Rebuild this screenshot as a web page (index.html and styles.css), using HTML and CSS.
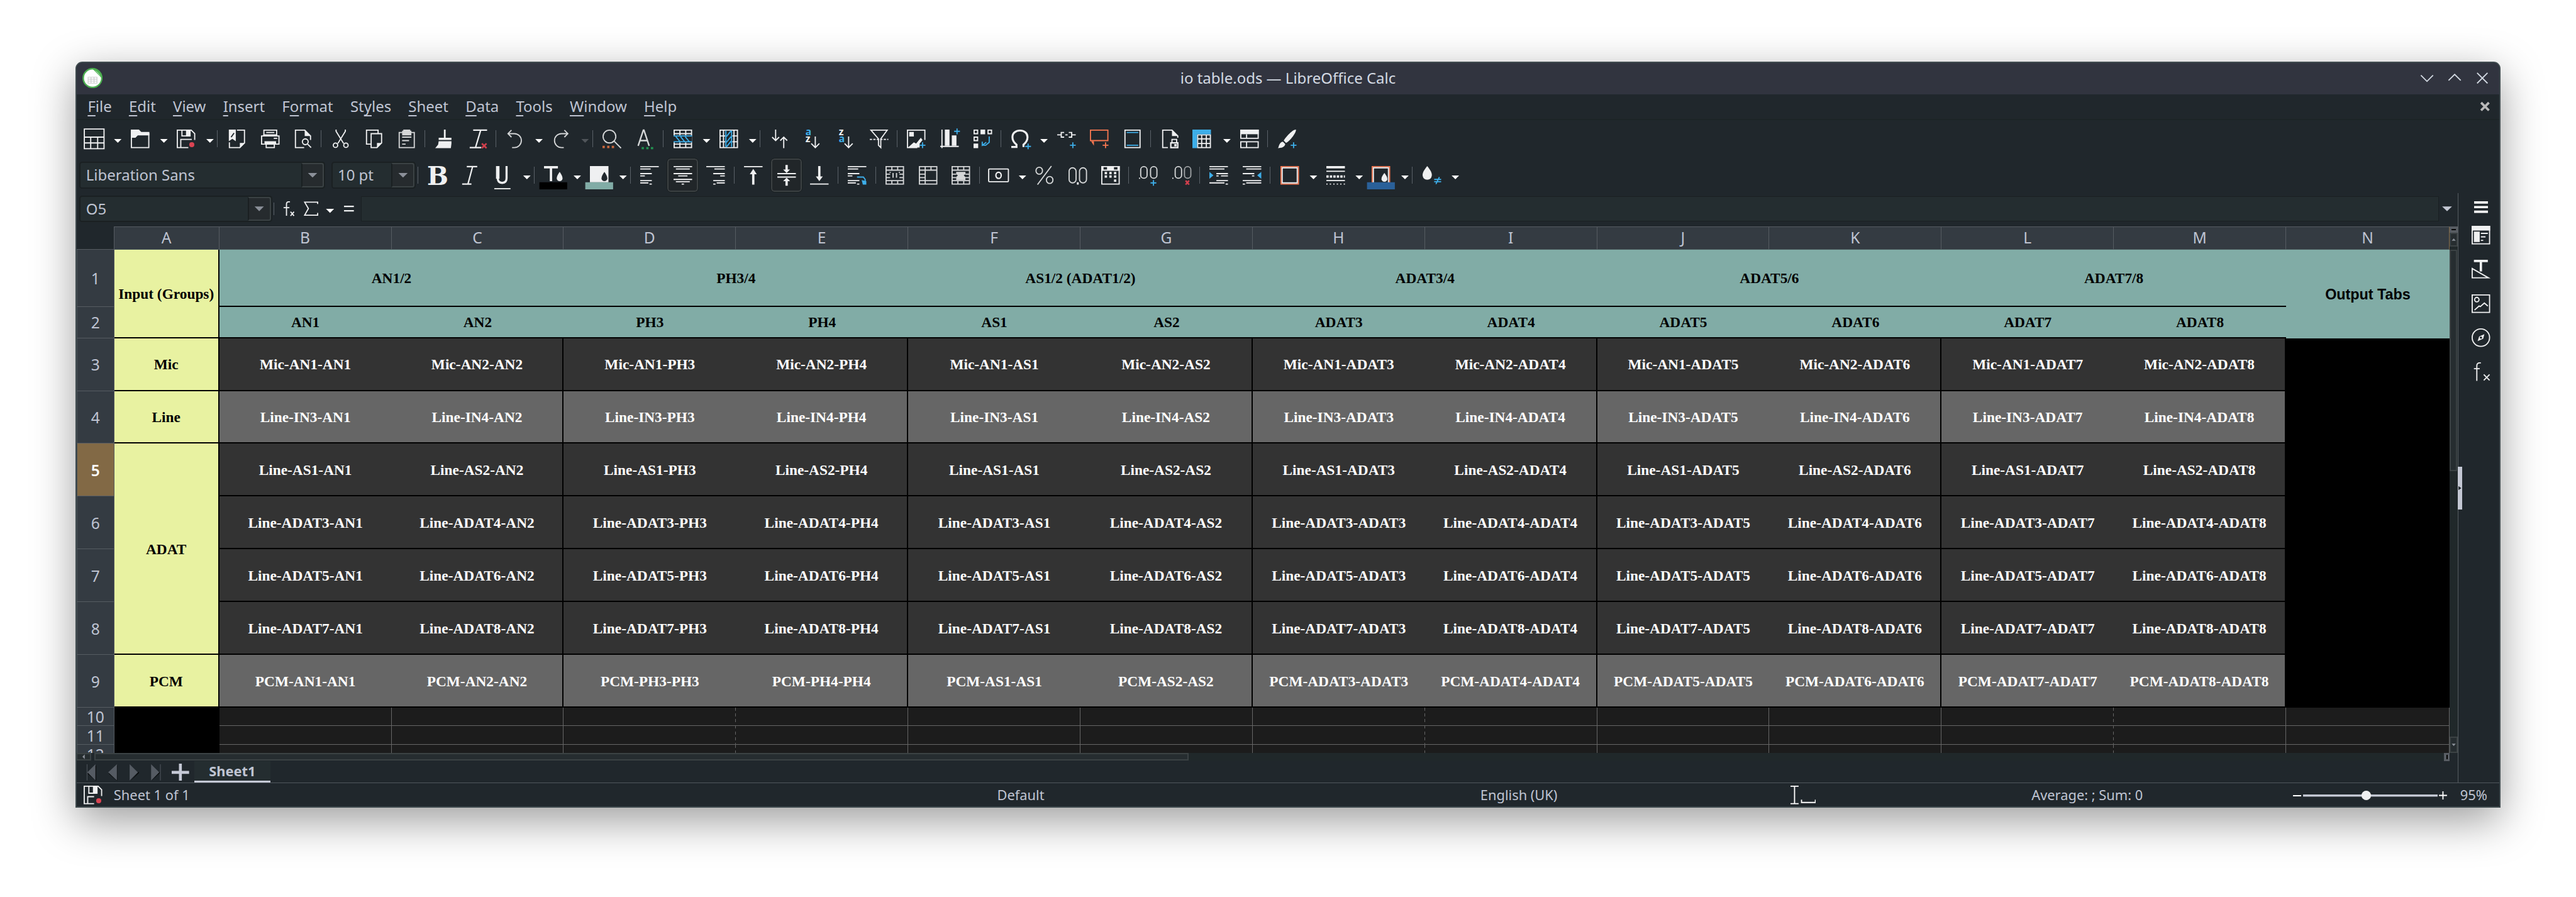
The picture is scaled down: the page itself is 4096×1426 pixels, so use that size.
FILE: index.html
```html
<!DOCTYPE html>
<html lang="en">
<head>
<meta charset="utf-8">
<title>io table.ods — LibreOffice Calc</title>
<link rel="stylesheet" href="styles.css">
</head>
<body>
<div class="desktop">
<div class="window">

<header class="titlebar">
  <svg class="app-icon" viewBox="0 0 34 34"><circle cx="17" cy="17" r="15.6" fill="#fff" stroke="#4caf50" stroke-width="2.6"/><path d="M17 1.500a15.500 15.500 0 0 1 15.500 15.500z" fill="#4caf50"/><path d="M20 3.500q8 3 10.500 11z" fill="#8ed08f"/><path d="M9.500 15.500h15v10h-15zM9.500 18.800h15M9.500 22.100h15M14.500 15.500v10M19.500 15.500v10" fill="none" stroke="#ccc" stroke-width="1.200"/></svg>
  <h1 class="title">io table.ods — LibreOffice Calc</h1>
  <div class="window-buttons">
    <svg viewBox="0 0 24 20"><path d="M1.500 5L12 15.500 22.500 5"/></svg>
    <svg viewBox="0 0 24 20"><path d="M1.500 14L12 3.500 22.500 14"/></svg>
    <svg viewBox="0 0 24 20"><path d="M3 1l18 18M21 1L3 19"/></svg>
  </div>
</header>

<nav class="menubar">
  <span><u>F</u>ile</span><span><u>E</u>dit</span><span><u>V</u>iew</span><span><u>I</u>nsert</span><span>F<u>o</u>rmat</span><span>St<u>y</u>les</span><span><u>S</u>heet</span><span><u>D</u>ata</span><span><u>T</u>ools</span><span><u>W</u>indow</span><span><u>H</u>elp</span>
  <svg class="close-doc" viewBox="0 0 16 16"><path d="M2 2l12 12M14 2L2 14"/></svg>
</nav>

<div class="toolbar standard">
  <div class="tb dd"><svg class="i" viewBox="0 0 16 16"><path d="M-.5-.5h17v17h-17zM-.5 6.500h17M-.5 11.500h17M5 6.500v10M11 6.500v10"/></svg></div>
  <div class="tb dd"><svg class="i" viewBox="0 0 16 16"><path class="f" d="M0 0h7l2 2h7v3H6L4 7H0z"/><path d="M.5 5v10.500h15V3"/></svg></div>
  <div class="tb dd"><svg class="i" viewBox="0 0 16 16"><path d="M10 15.500H.5V.5h12l3 3V9M3.500 15V8.500H13M4.500.5v5h6"/><path class="f" d="M8 0h4v6H8z"/><circle class="fr" cx="13" cy="13" r="2.200"/></svg></div>
  <i class="sep"></i>
  <div class="tb"><svg class="i" viewBox="0 0 16 16"><path class="f" d="M1 0h6v10L4 8l-3 2z"/><path d="M1.500 11v4.500h9l4-4V.5H8"/><path class="f" d="M10.500 16v-4.500H15z"/><path class="k" d="M5.500 3L3 6.500"/></svg></div>
  <div class="tb"><svg class="i" viewBox="0 0 16 16"><path d="M2.500 5V.5h11V5M4.500 2.500h7M3 12.500H.5v-7h15v7H13M4.500 13v2.500h7V13M11 7.500h3"/><path class="f" d="M3 10h10v3H3zM2 4h12v2H2z"/></svg></div>
  <div class="tb"><svg class="i" viewBox="0 0 16 16"><path d="M9 15.500H1.500V.5h8l5 5V9"/><path class="f" d="M9.500 0v5.500H15z"/><circle cx="10" cy="10.500" r="2.500"/><path d="M12 12.500l3 3"/></svg></div>
  <i class="sep"></i>
  <div class="tb"><svg class="i" viewBox="0 0 16 16"><path d="M4 0v1.500L10.500 12M12 0v1.500L5.500 12"/><circle cx="3.500" cy="13.500" r="1.900"/><circle cx="12.500" cy="13.500" r="1.900"/></svg></div>
  <div class="tb"><svg class="i" viewBox="0 0 16 16"><path d="M5 12.500H1.500V.5h10V3M5.500 3.500h9v8l-4 4h-5z"/><path class="f" d="M10.500 16v-4.500H15z"/></svg></div>
  <div class="tb dim"><svg class="i" viewBox="0 0 16 16"><path d="M1.500 2.500h13v13h-13zM4 6.500h8M4 9.500h6M4 12.500h3"/><path class="f" d="M5 0h6v1h1v4H4V1h1z"/></svg></div>
  <i class="sep"></i>
  <div class="tb"><svg class="i" viewBox="0 0 16 16"><path class="f" d="M7.500 0H9v7H7.500zM3 7h11v2H3zM3 10h11v2l-.5 4H0l2.500-3z"/></svg></div>
  <div class="tb"><svg class="i" viewBox="0 0 16 16"><path d="M4 .5h12M10.500.5L6 15.500M1 15.500h10" stroke-width="1.200"/><path class="r" d="M11.500 12l4 4M15.500 12l-4 4" stroke-width="1.500"/></svg></div>
  <i class="sep"></i>
  <div class="tb dd dim"><svg class="i" viewBox="0 0 16 16"><path d="M1.500 3.500H7a6 6 0 0 1 0 12H5M4.500.5l-3 3 3 3"/></svg></div>
  <div class="tb dd dim off"><svg class="i" viewBox="0 0 16 16"><path d="M13.500 3.500H8a6 6 0 0 0 0 12h2M10.500.5l3 3-3 3"/></svg></div>
  <i class="sep"></i>
  <div class="tb"><svg class="i dimmed" viewBox="0 0 16 16"><circle cx="6" cy="6" r="5.500"/><path d="M10 10l6 6"/><path class="fo" d="M0 14h2v2H0zM4 14h2v2H4zM8 14h2v2H8z"/></svg></div>
  <div class="tb"><svg class="i dimmed" viewBox="0 0 16 16"><path d="M2 14L6.500.500h.5L11.500 14M3.500 9.500h6.500" stroke-width="1.300"/><path class="fg" d="M5 15h2v2H5zM9 15h2v2H9zM13 15h2v2h-2z"/></svg></div>
  <i class="sep"></i>
  <div class="tb dd"><svg class="i" viewBox="0 0 16 16"><path d="M.5.5h15v15H.5zM0 3.500h16M0 12.500h16M5.500 0v5M10.500 0v5M5.500 11v5M10.500 11v5"/><path class="k2" d="M0 5h16v6H0z"/><path class="b" d="M0 5.500h16M0 10.500h16M2 6l4 5M6 6l4 5M10 6l4 5"/></svg></div>
  <div class="tb dd"><svg class="i" viewBox="0 0 16 16"><path d="M.5.5h15v15H.5zM3.500 0v16M12.500 0v16M0 5.500h5M0 10.500h5M11 5.500h5M11 10.500h5"/><path class="k2" d="M5 1h6v14H5z"/><path class="b" d="M5.500 1v14M10.500 1v14M6 6l4-5M6 11l4-5M6 15l4-5"/></svg></div>
  <i class="sep"></i>
  <div class="tb"><svg class="i" viewBox="0 0 16 16"><path d="M4.500 0v9.500M1.500 6.500l3 3 3-3M11.500 16V6.500M8.500 9.500l3-3 3 3"/></svg></div>
  <div class="tb"><svg class="i" viewBox="0 0 16 16"><text class="tbl" x="2" y="5">a</text><text class="twh" x="2" y="11">z</text><path d="M10.500 6v9.500M7 12l3.500 3.500L14 12"/></svg></div>
  <div class="tb"><svg class="i" viewBox="0 0 16 16"><text class="twh" x="2" y="5">z</text><text class="tbl" x="2" y="11">a</text><path d="M10.500 6v9.500M7 12l3.500 3.500L14 12"/></svg></div>
  <div class="tb"><svg class="i" viewBox="0 0 16 16"><path d="M1 .5h14L9.500 8v7.500l-2-2V8z"/><path d="M0 8.500h16" stroke-dasharray="2 1"/></svg></div>
  <i class="sep"></i>
  <div class="tb"><svg class="i" viewBox="0 0 16 16"><path d="M9 15.500H.5V.5h15V9"/><path class="f" d="M1 15.500L6 11l2 1 4-5 1.500 2-2.500 3v3.500zM2 2h4v4H2z"/><path class="b" d="M13.500 11v5M11 13.500h5"/></svg></div>
  <div class="tb"><svg class="i" viewBox="0 0 16 16"><path d="M1.500 0v16M0 14.500h16"/><path class="f" d="M4 0h4v14H4zM10 5h4v9h-4z"/><path class="b" d="M14.500-1v5M12 1.500h5"/></svg></div>
  <div class="tb"><svg class="i" viewBox="0 0 16 16"><path d="M.5.5h3v3h-3zM12.500.5h3v3h-3zM.5 6.500h3v3h-3z"/><path class="f" d="M6 0h4v4H6zM0 12h4v4H0z"/><path class="b" d="M13.500 6v5l-3 2.500H7.500M11 11l-3.500 2.500v-3"/></svg></div>
  <i class="sep"></i>
  <div class="tb dd"><svg class="i" viewBox="0 0 16 16"><path d="M0 15h4.500v-2C2 11 1 9 1 6.500 1 3 4 .8 7.500.8S14 3 14 6.500c0 2.500-1 4.500-3.500 6.500v2" stroke-width="1.700"/><path class="b" d="M14.500 12v5M12 14.500h5"/></svg></div>
  <div class="tb"><svg class="i" viewBox="0 0 16 16"><path d="M0 4.500h4M12 4.500h4M6 2.500H3.500v4H6M10 2.500h2.500v4H10M7 4.500h2"/><path class="b" d="M13.500 11v5M11 13.500h5"/></svg></div>
  <div class="tb"><svg class="i" viewBox="0 0 16 16"><path class="o" d="M.5.500h15v9H.5z"/><path class="fo2" d="M1 10h2.500v4z"/><path class="o" d="M13.500 11v5M11 13.500h5"/></svg></div>
  <div class="tb"><svg class="i" viewBox="0 0 16 16"><path d="M1.500.5h13v15h-13z"/><path class="b" d="M3 2.500h10M3 13.500h10"/></svg></div>
  <i class="sep"></i>
  <div class="tb"><svg class="i" viewBox="0 0 16 16"><path d="M6 15.500H1.500V.5h8l5 5V7M9.500 11V8.500h4V11"/><path class="f" d="M9.500 0v5.500H15z"/><path d="M8.500 11.500h6v4h-6z" stroke-width="1.200"/><path class="f" d="M11.500 12.500h2v2h-2z"/></svg></div>
  <div class="tb dd nudge"><svg class="i" viewBox="0 0 16 16"><path d="M4.500 4.500h11v11h-11zM8 4v12M12 4v12M4 8h12M4 12h12"/><path class="fb" d="M0 0h16v4H4v12H0z"/></svg></div>
  <div class="tb"><svg class="i" viewBox="0 0 16 16"><path class="f" d="M0 0h16v4H0z"/><path d="M.5.500h15v7H.500zM.5 10.500h15v5H.500zM5.500 4v4M5.500 10v6"/></svg></div>
  <i class="sep"></i>
  <div class="tb"><svg class="i" viewBox="0 0 16 16"><path class="f" d="M15.500 0c.8 2-5 10-8.500 11.500L5 9.500C7 6 13-.3 15.500 0zM4.300 10.500l2 2C6 15 3 16 0 16c1-1 .8-5 4.300-5.500z"/><path class="b" d="M13.500 11v5M11 13.500h5"/></svg></div>
</div>

<div class="toolbar formatting">
  <div class="combo font-name"><span>Liberation Sans</span><i class="drop"></i></div>
  <div class="combo font-size"><span>10 pt</span><i class="drop"></i></div>
  <i class="sep"></i>
  <div class="tb"><svg class="i" viewBox="0 0 16 16"><text class="bold-letter" x="-.6" y="16">B</text></svg></div>
  <div class="tb"><svg class="i" viewBox="0 0 16 16"><path d="M5 .5h9M10 .5L6 15.500M1 15.500h8" stroke-width="1.200"/></svg></div>
  <div class="tb dd"><svg class="i" viewBox="0 0 16 16"><path d="M3.500 0v10.500q0 4 3.800 4t3.800-4V0" stroke-width="1.800"/><path class="f" d="M2 0h3v11H2z"/><path d="M.5 19.500h14"/></svg></div>
  <i class="sep"></i>
  <div class="tb dd"><svg class="i" viewBox="0 0 16 16"><path class="f" d="M0 0h12v2H0zM5 1h2v12H5zM13.500 5c2.500 3.500 2.500 5 2.500 6q-.5 2-2.500 2t-2.500-2c0-1 0-2.500 2.500-6z"/><path class="black" d="M-4 14h24v6H-4z"/></svg></div>
  <div class="tb dd"><svg class="i" viewBox="0 0 16 16"><path class="f" d="M0 0h16v14H0z"/><path class="k2" d="M12.500 5c2.500 3.500 2.500 5 2.500 6q-.5 2-2.500 2t-2.500-2c0-1 0-2.500 2.500-6z"/><path class="teal" d="M-4 14h24v6H-4z"/></svg></div>
  <i class="sep"></i>
  <div class="tb"><svg class="i" viewBox="0 0 16 16"><path d="M0 .5h16M0 2.500h9M0 6.500h10M0 8.500h4M0 12.500h10M0 14.500h7M8 15.500h2"/></svg></div>
  <div class="tb"><span class="pressed"><svg class="i" viewBox="0 0 16 16"><path d="M0 .5h16M2 2.500h12M0 6.500h16M4 8.500h8M0 11.500h16M2 13.500h12M7 15.500h2"/></svg></span></div>
  <div class="tb"><svg class="i" viewBox="0 0 16 16"><path d="M0 .5h16M7 2.500h9M6 6.500h10M12 8.500h4M6 12.500h10M9 14.500h7M6 15.500h2"/></svg></div>
  <i class="sep"></i>
  <div class="tb"><svg class="i" viewBox="0 0 16 16"><path d="M0 .5h16"/><path class="f" d="M7 16V7H5l3-4.500L11 7H9v9z"/></svg></div>
  <div class="tb"><span class="pressed"><svg class="i" viewBox="0 0 16 16"><path d="M0 6.500h16M0 9.500h16"/><path class="f" d="M7-1h2v4h2L8 6 5 3h2zM7 17h2v-4h2l-3-3-3 3h2z"/></svg></span></div>
  <div class="tb"><svg class="i" viewBox="0 0 16 16"><path d="M0 15.500h16"/><path class="f" d="M7 0v9H5l3 4 3-4H9V0z"/></svg></div>
  <i class="sep"></i>
  <div class="tb"><svg class="i" viewBox="0 0 16 16"><path d="M0 .5h16M0 2.500h9M0 6.500h10M0 8.500h4M0 12.500h10M0 14.500h7M8 15.500h2"/><path class="b" d="M8 9.500h5.500l1.500 2V13"/><path class="fb" d="M12 12l4 1v3h-3z"/></svg></div>
  <i class="sep"></i>
  <div class="tb dim"><svg class="i" viewBox="0 0 16 16"><path d="M.5.5h15v15H.5zM0 3.500h16M0 12.500h16M5.500 0v3M10.500 0v3M5.500 12v4M10.500 12v4M0 7h4M12 7h4M0 10h4M12 10h4M6.500 6v4M9.500 6v4M4 5v1M12 5v1"/></svg></div>
  <div class="tb dim"><svg class="i" viewBox="0 0 16 16"><path d="M.5.5h15v15H.5zM0 3.500h16M5.500 0v16M10.500 0v4M0 7h5M0 10h5M0 12.500h16"/></svg></div>
  <div class="tb dim"><svg class="i" viewBox="0 0 16 16"><path d="M.5.5h15v15H.5zM0 3.500h16M0 12.500h16M5.500 0v3M10.500 0v3M5.500 12v4M10.500 12v4M0 7h4M12 7h4M0 10h4M12 10h4"/><path class="f" d="M4 5h8v2l-1.500 1 1.500 1.500V12H4V9.500L5.500 8 4 7z"/></svg></div>
  <i class="sep"></i>
  <div class="tb dd"><svg class="i" viewBox="0 0 16 16"><rect x="-.5" y="2.500" width="17" height="11" rx=".6"/><ellipse cx="8" cy="8" rx="2.300" ry="2.700" stroke-width="1.200"/></svg></div>
  <div class="tb"><svg class="i dimmed" viewBox="0 0 16 16"><ellipse cx="3.500" cy="4" rx="2.800" ry="3"/><ellipse cx="12.500" cy="12" rx="2.800" ry="3"/><path d="M14 0L2 16"/></svg></div>
  <div class="tb"><svg class="i dimmed" viewBox="0 0 16 16"><rect x=".5" y="1.500" width="6" height="13" rx="3"/><rect x="9.500" y="1.500" width="6" height="13" rx="3"/><path class="f" d="M7.200 14h1.600v2H7.200z"/></svg></div>
  <div class="tb"><svg class="i" viewBox="0 0 16 16"><path d="M.5.500h15v15H.500z"/><path class="f" d="M0 0h2v3h3V0h6v3h3V0h2v4H0zM3 5h2v2H3zM7 5h2v2H7zM11 5h2v2h-2zM3 8h2v2H3zM7 8h2v2H7zM11 8h2v2h-2zM11 11.500h2v2h-2z"/></svg></div>
  <i class="sep"></i>
  <div class="tb"><svg class="i dimmed" viewBox="0 0 16 16"><rect x="1.500" y=".5" width="5.500" height="10" rx="2.700"/><rect x="10" y=".5" width="5.500" height="10" rx="2.700"/><path class="f" d="M0 10h1v1H0z"/><path class="b" d="M12.500 12v5M10 14.500h5"/></svg></div>
  <div class="tb"><svg class="i dimmed" viewBox="0 0 16 16"><rect x="2.500" y=".5" width="5.500" height="10" rx="2.700"/><rect x="10.500" y=".5" width="5.500" height="10" rx="2.700" opacity=".7"/><path class="f" d="M0 10h1v1H0z"/><path class="r" d="M11.500 12.500l3 3.500M14.500 12.500l-3 3.500" stroke-width="1.400"/></svg></div>
  <i class="sep"></i>
  <div class="tb"><svg class="i" viewBox="0 0 16 16"><path d="M0 .5h16M0 2.500h13M6 6.500h10M6 8.500h2M10 8.500h6M6 12.500h10M0 14.500h13M14 15.500h2"/><path class="fb" d="M0 5l3.500 3L0 11z"/></svg></div>
  <div class="tb"><svg class="i" viewBox="0 0 16 16"><path d="M0 .5h16M3 2.500h13M0 6.500h10M8 8.500h2M0 12.500h16M3 14.500h13M0 15.500h2"/><path class="fb" d="M16 5l-3.500 3 3.500 3z"/></svg></div>
  <i class="sep"></i>
  <div class="tb dd"><svg class="i" viewBox="0 0 16 16"><path class="o" d="M.5.500h15v15H.500z"/><path d="M1.500 1.500h13v13h-13z"/></svg></div>
  <div class="tb dd"><svg class="i" viewBox="0 0 16 16"><path class="f" d="M0 0h16v2H0z"/><path d="M0 4.500h16"/><path d="M0 9h16" stroke-width="2" stroke-dasharray="2 1"/><path d="M0 12.500h16"/><path d="M0 15.500h16" stroke-dasharray="1 2"/></svg></div>
  <div class="tb dd"><svg class="i" viewBox="0 0 16 16"><path class="o" d="M.5 15V.5h15V15"/><path d="M1.500 15V1.500h13V15"/><path class="f" d="M11 6c2.500 3 2.500 4.500 2.500 5.500q-.5 2-2.500 2t-2.500-2C8.500 10.500 8.500 9 11 6z"/><path class="navy" d="M-4 14h24v6H-4z"/></svg></div>
  <i class="sep"></i>
  <div class="tb dd"><svg class="i" viewBox="0 0 16 16"><path class="f" d="M4 0c3.500 4.500 4 6 4 8q-.5 3.800-4 3.800T0 8c0-2 .5-3.500 4-8z"/><path class="b" d="M10 11.500h6M10 13.500h6M14.500 9.500l-3 6"/></svg></div>
</div>

<main class="body">
  <section class="document">
    <div class="formula-bar">
      <div class="combo name-box"><span>O5</span><i class="drop"></i></div>
      <i class="sep short"></i>
      <svg class="fx" viewBox="0 0 20 26"><path d="M12 1H9.500Q6 1 6 5v20M1 11h10M13 18l6 7M19 18l-6 7"/></svg>
      <svg class="sum" viewBox="0 0 25 26"><path d="M24 4.500V1.500H1.500L8 12.500 1.500 24H24v-4"/></svg>
      <i class="tri"></i>
      <svg class="eq" viewBox="0 0 17 10"><path d="M0 1.200h17M0 8.800h17"/></svg>
      <div class="formula-input"></div>
      <i class="tri big"></i>
    </div>

    <div class="sheet-area">
      <div class="grid">
        <div class="corner"></div><div class="ch">A</div><div class="ch">B</div><div class="ch">C</div><div class="ch">D</div><div class="ch">E</div><div class="ch">F</div><div class="ch">G</div><div class="ch">H</div><div class="ch">I</div><div class="ch">J</div><div class="ch">K</div><div class="ch">L</div><div class="ch">M</div><div class="ch last">N</div>

        <div class="rh">1</div><div class="c y rows2">Input (Groups)</div><div class="c t pair">AN1/2</div><div class="c t pair">PH3/4</div><div class="c t pair">AS1/2 (ADAT1/2)</div><div class="c t pair">ADAT3/4</div><div class="c t pair">ADAT5/6</div><div class="c t pair">ADAT7/8</div><div class="c t rows2 sans">Output Tabs</div>
        <div class="rh">2</div><div class="c t">AN1</div><div class="c t">AN2</div><div class="c t">PH3</div><div class="c t">PH4</div><div class="c t">AS1</div><div class="c t">AS2</div><div class="c t">ADAT3</div><div class="c t">ADAT4</div><div class="c t">ADAT5</div><div class="c t">ADAT6</div><div class="c t">ADAT7</div><div class="c t">ADAT8</div>

        <div class="rh">3</div><div class="c y">Mic</div><div class="c d">Mic-AN1-AN1</div><div class="c d e">Mic-AN2-AN2</div><div class="c d">Mic-AN1-PH3</div><div class="c d e">Mic-AN2-PH4</div><div class="c d">Mic-AN1-AS1</div><div class="c d e">Mic-AN2-AS2</div><div class="c d">Mic-AN1-ADAT3</div><div class="c d e">Mic-AN2-ADAT4</div><div class="c d">Mic-AN1-ADAT5</div><div class="c d e">Mic-AN2-ADAT6</div><div class="c d">Mic-AN1-ADAT7</div><div class="c d e">Mic-AN2-ADAT8</div><div class="k rows7"></div>
        <div class="rh">4</div><div class="c y">Line</div><div class="c g">Line-IN3-AN1</div><div class="c g e">Line-IN4-AN2</div><div class="c g">Line-IN3-PH3</div><div class="c g e">Line-IN4-PH4</div><div class="c g">Line-IN3-AS1</div><div class="c g e">Line-IN4-AS2</div><div class="c g">Line-IN3-ADAT3</div><div class="c g e">Line-IN4-ADAT4</div><div class="c g">Line-IN3-ADAT5</div><div class="c g e">Line-IN4-ADAT6</div><div class="c g">Line-IN3-ADAT7</div><div class="c g e">Line-IN4-ADAT8</div>
        <div class="rh current">5</div><div class="c y rows4">ADAT</div><div class="c d">Line-AS1-AN1</div><div class="c d e">Line-AS2-AN2</div><div class="c d">Line-AS1-PH3</div><div class="c d e">Line-AS2-PH4</div><div class="c d">Line-AS1-AS1</div><div class="c d e">Line-AS2-AS2</div><div class="c d">Line-AS1-ADAT3</div><div class="c d e">Line-AS2-ADAT4</div><div class="c d">Line-AS1-ADAT5</div><div class="c d e">Line-AS2-ADAT6</div><div class="c d">Line-AS1-ADAT7</div><div class="c d e">Line-AS2-ADAT8</div>
        <div class="rh">6</div><div class="c d">Line-ADAT3-AN1</div><div class="c d e">Line-ADAT4-AN2</div><div class="c d">Line-ADAT3-PH3</div><div class="c d e">Line-ADAT4-PH4</div><div class="c d">Line-ADAT3-AS1</div><div class="c d e">Line-ADAT4-AS2</div><div class="c d">Line-ADAT3-ADAT3</div><div class="c d e">Line-ADAT4-ADAT4</div><div class="c d">Line-ADAT3-ADAT5</div><div class="c d e">Line-ADAT4-ADAT6</div><div class="c d">Line-ADAT3-ADAT7</div><div class="c d e">Line-ADAT4-ADAT8</div>
        <div class="rh">7</div><div class="c d">Line-ADAT5-AN1</div><div class="c d e">Line-ADAT6-AN2</div><div class="c d">Line-ADAT5-PH3</div><div class="c d e">Line-ADAT6-PH4</div><div class="c d">Line-ADAT5-AS1</div><div class="c d e">Line-ADAT6-AS2</div><div class="c d">Line-ADAT5-ADAT3</div><div class="c d e">Line-ADAT6-ADAT4</div><div class="c d">Line-ADAT5-ADAT5</div><div class="c d e">Line-ADAT6-ADAT6</div><div class="c d">Line-ADAT5-ADAT7</div><div class="c d e">Line-ADAT6-ADAT8</div>
        <div class="rh">8</div><div class="c d">Line-ADAT7-AN1</div><div class="c d e">Line-ADAT8-AN2</div><div class="c d">Line-ADAT7-PH3</div><div class="c d e">Line-ADAT8-PH4</div><div class="c d">Line-ADAT7-AS1</div><div class="c d e">Line-ADAT8-AS2</div><div class="c d">Line-ADAT7-ADAT3</div><div class="c d e">Line-ADAT8-ADAT4</div><div class="c d">Line-ADAT7-ADAT5</div><div class="c d e">Line-ADAT8-ADAT6</div><div class="c d">Line-ADAT7-ADAT7</div><div class="c d e">Line-ADAT8-ADAT8</div>
        <div class="rh">9</div><div class="c y">PCM</div><div class="c g">PCM-AN1-AN1</div><div class="c g e">PCM-AN2-AN2</div><div class="c g">PCM-PH3-PH3</div><div class="c g e">PCM-PH4-PH4</div><div class="c g">PCM-AS1-AS1</div><div class="c g e">PCM-AS2-AS2</div><div class="c g">PCM-ADAT3-ADAT3</div><div class="c g e">PCM-ADAT4-ADAT4</div><div class="c g">PCM-ADAT5-ADAT5</div><div class="c g e">PCM-ADAT6-ADAT6</div><div class="c g">PCM-ADAT7-ADAT7</div><div class="c g e">PCM-ADAT8-ADAT8</div>

        <div class="rh">10</div><div class="k rows3"></div><div class="n"></div><div class="n"></div><div class="n brk"></div><div class="n"></div><div class="n"></div><div class="n"></div><div class="n brk"></div><div class="n"></div><div class="n"></div><div class="n"></div><div class="n brk"></div><div class="n"></div><div class="n"></div>
        <div class="rh">11</div><div class="n"></div><div class="n"></div><div class="n brk"></div><div class="n"></div><div class="n"></div><div class="n"></div><div class="n brk"></div><div class="n"></div><div class="n"></div><div class="n"></div><div class="n brk"></div><div class="n"></div><div class="n"></div>
        <div class="rh cut">12</div><div class="n"></div><div class="n"></div><div class="n brk"></div><div class="n"></div><div class="n"></div><div class="n"></div><div class="n brk"></div><div class="n"></div><div class="n"></div><div class="n"></div><div class="n brk"></div><div class="n"></div><div class="n"></div>
      </div>
      <div class="vscroll">
        <div class="split-grip"></div>
        <div class="arrow-box up"></div>
        <div class="thumb"></div>
        <div class="track"></div>
        <div class="arrow-box down"></div>
      </div>
    </div>

    <div class="hscroll">
      <div class="arrow-box left"></div>
      <div class="thumb"></div>
      <div class="track"></div>
      <div class="split-grip"></div>
    </div>

    <div class="tabs">
      <svg class="nav" viewBox="0 0 130 30"><path class="sh" d="M17 3v27L2.500 17zM53.500 3v27L39 17zM76 30l15-14v-2zM112 30l15-14v-2z"/><path d="M16 1v28L2 15zM1 1h1v28H1zM53 1v28L38 15zM75 1v28l14-14zM112 1v28l14-14zM127.500 1h1v28h-1z"/></svg>
      <svg class="plus" viewBox="0 0 30 30"><path d="M0 15h30M15 0v30"/></svg>
      <div class="tab">Sheet1</div>
    </div>
  </section>

  <aside class="sidebar">
    <div class="sidebar-handle"></div>
    <svg class="burger" viewBox="0 0 24 20"><path d="M0 2h24M0 10h24M0 18h24"/></svg>
    <svg class="i" viewBox="0 0 16 16"><path d="M.5.500h15v15H.500zM8 6.500h6M8 9.500h4M8 12.500h2"/><path class="f" d="M0 0h16v4H0zM2 5h5v9H2z"/></svg>
    <svg class="i" viewBox="0 0 16 16"><path d="M.5 7.500v8h14z"/><path class="f" d="M2 0h12v2H2zM7 1h2v9H7z"/></svg>
    <svg class="i" viewBox="0 0 16 16"><path d="M.5.500h15v15H.500zM2.500 13.500l4-3.500 1 .5L11 7.500l3 2.500"/><circle cx="4.500" cy="4.500" r="1.900"/></svg>
    <svg class="i" viewBox="0 0 16 16"><circle cx="8" cy="8" r="7.500"/><path class="f" fill-rule="evenodd" d="M11 5l-1 4-4.800 2L6.500 7zM8 7a1 1 0 1 0 .1 2A1 1 0 0 0 8 7z"/></svg>
    <svg class="i" viewBox="0 0 16 16"><path d="M8 .5H7Q4.500.500 4.500 3v13M2 5.500h5M10.500 10.500l5 5M15.500 10.500l-5 5"/></svg>
  </aside>
</main>

<footer class="statusbar">
  <div class="st-save"><svg class="i" viewBox="0 0 16 16"><path d="M9 15.500H.5V.5h12l3 3V9M3.500 15V9.500H9M4.500.5v6h6"/><path class="f" d="M8 0h4v7H8z"/><circle class="fr" cx="13" cy="13" r="2.200"/></svg></div>
  <div>Sheet 1 of 1</div>
  <div class="st-center">Default</div>
  <div class="st-center">English (UK)</div>
  <div class="st-mode"><svg viewBox="0 0 44 32"><path d="M0 1h14M0 31h14M7 1v30M19 24v5h24v-5"/></svg></div>
  <div>Average: ; Sum: 0</div>
  <div class="zoom-ctl"><i class="minus"></i><div class="slider"><i class="knob"></i></div><svg viewBox="0 0 14 14"><path d="M0 7h14M7 0v14"/></svg></div>
  <div>95%</div>
</footer>

</div>
</div>
</body>
</html>
```

FILE: styles.css
```css
:root {
  --bg: #20272c;
  --ink: #eff0f1;
  --text: #bfc4d2;
  --field: #242d30;
  --edge: #1a2022;
  --line: #50575d;
  --head: #343b42;
  --blue: #3daee9;
  --ui: "Noto Sans", "Open Sans", sans-serif;
}

* { box-sizing: border-box; }

html { overflow: hidden; background: #fff; }

body {
  margin: 0;
  width: 4096px;
  height: 1426px;
  overflow: hidden;
  background: #fff;
}

/* The desktop is laid out at 4442x1546 and zoomed to the viewport. */
.desktop {
  width: 4442px;
  height: 1546px;
  padding: 106px 130px 154px;
  zoom: 0.92211;
  font: 26px/1.36 var(--ui);
  color: var(--text);
}

.window {
  display: flex;
  flex-direction: column;
  width: 4182px;
  height: 1286px;
  border: 2.2px solid #3f4a4e;
  border-radius: 12px 12px 0 0;
  background: var(--bg);
  box-shadow: 0 22px 74px rgba(0, 0, 0, .39);
}

svg { display: block; flex: none; }
i { display: block; flex: none; }

/* title bar */
.titlebar {
  display: grid;
  flex: none;
  grid-template-columns: 200px 1fr 200px;
  align-items: center;
  height: 54px;
  padding: 0 17px 1px 10px;
  border-radius: 10px 10px 0 0;
  background: #31343f;
}
.app-icon { width: 35px; height: 35px; }
.title {
  margin: 0;
  font-size: 26px;
  font-weight: 400;
  text-align: center;
  color: #d3dae3;
  padding-left: 7px;
}
.window-buttons { display: flex; gap: 24px; justify-content: flex-end; }
.window-buttons svg { width: 24px; height: 20px; fill: none; stroke: #d3dae3; stroke-width: 2; }

/* menu bar */
.menubar {
  display: flex;
  flex: none;
  gap: 29.5px;
  align-items: center;
  height: 45px;
  padding: 1px 16px 1px 19px;
  border-bottom: 2.2px solid #1c2426;
}
.menubar u { text-decoration-thickness: 2px; text-underline-offset: 5px; text-decoration-skip-ink: none; }
.close-doc { width: 18px; height: 18px; margin-left: auto; fill: none; stroke: #b9b9b9; stroke-width: 3.6; }

/* toolbars */
.toolbar { display: flex; flex: none; align-items: center; }
.standard { height: 64px; padding-left: 1.5px; }
.formatting { height: 62px; padding-left: 5px; }
.tb { display: flex; flex: none; align-items: center; justify-content: center; width: 57px; height: 56px; }
.tb.dd { width: 79.5px; justify-content: flex-start; gap: 18px; padding-left: 12.5px; }
.formatting .tb.dd { width: 78.9px; }
.tb.dd::after, .tri {
  content: "";
  width: 14px;
  height: 7px;
  margin-top: 7px;
  background: #fff;
  clip-path: polygon(0 0, 100% 0, 50% 100%);
}
.tb.off::after { background: #50555a; }
.nudge .i { margin-left: -3px; margin-right: 3px; }
.sep { width: 8px; height: 30px; border-left: 1.5px solid #5a6168; margin-left: 2.5px; margin-right: -2.5px; }
.pressed {
  display: flex;
  flex: none;
  align-items: center;
  justify-content: center;
  width: 54px;
  height: 57px;
  border: 2.2px solid #3c4143;
  border-radius: 6px;
  background: #212629;
  outline: 1px solid #191f21;
}

/* icons on a 16-unit grid */
.i { width: 32px; height: 32px; overflow: visible; fill: none; stroke: var(--ink); stroke-width: 1; }
.dim .i { opacity: .87; }
.dimmed { stroke: #d5d7d8; }
.i .f { fill: var(--ink); stroke: none; }
.i .fr { fill: #da4453; stroke: none; }
.i .fo { fill: #c9683f; stroke: none; }
.i .fo2 { fill: #f67750; stroke: none; }
.i .fg { fill: #21914f; stroke: none; }
.i .fb { fill: var(--blue); stroke: none; }
.i .b { stroke: var(--blue); }
.i .r { stroke: #d03f4c; }
.i .o { stroke: #f67750; }
.i .k { stroke: var(--bg); }
.i .k2 { fill: var(--bg); stroke: none; }
.i .black { fill: #000; stroke: none; }
.i .teal { fill: #81aca6; stroke: none; }
.i .navy { fill: #2a6099; stroke: none; }
.i text { stroke: none; fill: var(--ink); font: 700 8.5px "Noto Sans", sans-serif; }
.i text.tbl { fill: var(--blue); }
.i text.bold-letter { font: 700 21.8px "DejaVu Serif", serif; }

/* combo boxes */
.combo {
  display: flex;
  flex: none;
  align-items: center;
  justify-content: space-between;
  height: 46px;
  padding-left: 9px;
  border: 2.2px solid var(--edge);
  border-radius: 5px;
  background: var(--field);
}
.drop {
  display: flex;
  align-items: center;
  justify-content: center;
  width: 40px;
  height: 42px;
  border: 2.2px solid #3b4244;
  border-left-color: var(--edge);
  border-radius: 0 4px 4px 0;
  background: #262b2e;
}
.drop::after {
  content: "";
  width: 16px;
  height: 8px;
  background: #8b9099;
  clip-path: polygon(0 0, 100% 0, 50% 100%);
}
.font-name { width: 424px; margin-right: 10px; }
.font-size { width: 146px; }
.name-box { width: 332px; }

/* main area */
.body { display: flex; flex: none; height: 1017px; border-bottom: 1.2px solid var(--line); }
.document { width: 4106px; }

.formula-bar { display: flex; align-items: center; height: 57px; padding: 0 10px 3px 5px; }
.sep.short { height: 22px; width: 15px; margin-left: 3px; margin-right: 0; }
.formula-bar svg { fill: none; stroke: var(--ink); stroke-width: 2; }
.fx { width: 20px; height: 26px; margin-left: 1px; }
.sum { width: 25px; height: 26px; margin: 0 13px 0 16px; }
.eq { width: 17px; height: 10px; margin: 0 12px 0 17px; }
.formula-bar .eq { stroke-width: 2.4; }
.formula-input { flex: 1; height: 44px; border: 1.5px solid var(--edge); background: var(--field); }
.tri.big { width: 17px; height: 8px; margin: 0 0 0 6px; background: #c3c7d3; }

.sheet-area { display: flex; height: 908px; }
.grid {
  display: grid;
  grid-template-columns: 65px 181px repeat(12, 297px) 282px;
  grid-template-rows: 40px 99px 54px repeat(7, 91px) 32px 32px 14px;
  width: 4092px;
}
.ch, .rh {
  display: flex;
  align-items: center;
  justify-content: center;
  border: 0 solid #565c62;
  background: var(--head);
  font-size: 26.67px;
  line-height: 30px;
}
.ch { border-top-width: 1.2px; border-right-width: 1.2px; border-bottom: 1.2px solid #4b5a5c; }
.ch.last { border-right-color: #826945; }
.rh { padding-top: 2px; border-bottom-width: 1.2px; border-right-width: 1.2px; border-left: 1.2px solid #454c52; }
.rh.current { background: #826945; color: #fff; font-weight: 600; }
.rh.cut { align-items: flex-start; overflow: hidden; border-bottom: 0; }
.corner { border-bottom: 1.2px solid #565c62; border-right: 1.2px solid #565c62; }

.c {
  display: flex;
  align-items: center;
  justify-content: center;
  padding-top: 2px;
  border-bottom: 2.2px solid #000;
  font: 700 25.33px/1.15 "Liberation Serif", "Times New Roman", serif;
  white-space: nowrap;
}
.y { background: #e8f2a1; color: #000; border-right: 2.2px solid #000; }
.t { background: #81aca6; color: #000; }
.d { background: #333; color: #fff; }
.g { background: #666; color: #fff; }
.e { border-right: 2.2px solid #000; }
.k { background: #000; }
.sans { font-family: "Liberation Sans", Arial, sans-serif; border-bottom: 0; }
.pair { grid-column: span 2; }
.rows2 { grid-row: span 2; }
.rows3 { grid-row: span 3; }
.rows4 { grid-row: span 4; }
.rows7 { grid-row: span 7; }
.n { background: #1c1c1c; border-right: 1.2px solid #666; border-bottom: 1.2px solid #666; }
.n.brk {
  border-right: 0;
  background: repeating-linear-gradient(to bottom, #666 0 5px, #1c1c1c 5px 10px) right / 1.1px 100% no-repeat #1c1c1c;
}
.rh.cut ~ .n { border-bottom: 0; }

/* scroll bars */
.vscroll { display: flex; flex-direction: column; width: 14px; background: #20282a; }
.split-grip { flex: none; background: #585d63; }
.vscroll .split-grip { height: 11px; border: solid #585d63; border-width: 4.4px 3.3px 4.4px; background: #000; }
.arrow-box { display: flex; flex: none; align-items: center; justify-content: center; border: 2.2px solid #3b4244; background: #262d30; }
.arrow-box::after { content: ""; flex: none; background: #8b9099; }
.vscroll .arrow-box::after { width: 7px; height: 4px; }
.up { height: 24px; margin-bottom: 5px; }
.up::after { clip-path: polygon(50% 0, 100% 100%, 0 100%); }
.down { height: 28px; }
.down::after { clip-path: polygon(0 0, 100% 0, 50% 100%); }
.thumb { flex: none; border: 2.2px solid #3b4244; background: #262d30; }
.vscroll .thumb { height: 382px; margin-right: 1px; }
.track { flex: 1; background: #20282a; }

.hscroll { display: flex; height: 14px; padding-right: 14px; }
.left { width: 25px; margin-right: 6px; border-left-width: 1.2px; }
.left::after { width: 4px; height: 8px; clip-path: polygon(100% 0, 100% 100%, 0 50%); }
.hscroll .thumb { width: 1886px; }
.hscroll .arrow-box, .hscroll .thumb, .hscroll .track { height: 13px; }
.hscroll .split-grip { width: 10px; border: 3.3px solid #585d63; border-left-width: 4.4px; background: #000; }

/* sheet tabs */
.tabs { display: flex; height: 37px; }
.nav { width: 130px; height: 30px; margin: 4px 0 0 16px; fill: #555b63; }
.nav .sh { fill: #000; }
.plus { width: 30px; height: 30px; margin: 4px 9px 0 18px; stroke: #c5c9d6; stroke-width: 5; }
.tab { width: 131px; height: 37px; border-bottom: 3.3px solid #c5c9d6; background: #242d30; font-weight: 700; font-size: 23.7px; line-height: 35px; text-align: center; }

/* sidebar */
.sidebar {
  position: relative;
  display: flex;
  flex-direction: column;
  align-items: center;
  gap: 27px;
  width: 72px;
  padding-top: 14px;
  border-left: 1.5px solid #565c62;
  padding-left: 7px;
}
.burger { width: 24px; height: 20px; margin-bottom: -5px; stroke: #fff; stroke-width: 4; }
.sidebar-handle {
  position: absolute;
  left: -1px;
  top: 472px;
  width: 7px;
  height: 73px;
  background: #c3c7d3;
}
.sidebar-handle::after {
  content: "";
  position: absolute;
  left: 1px;
  top: 33px;
  width: 5px;
  height: 7px;
  background: var(--bg);
  clip-path: polygon(0 0, 100% 50%, 0 100%);
}

/* status bar */
.statusbar {
  display: grid;
  flex: none;
  grid-template-columns: 64px 1026px 1076px 642px 563px 451px 288px 1fr;
  align-items: center;
  height: 40px;
  padding-top: 1px;
  font-size: 23.7px;
  line-height: 32px;
}
.st-save { padding-left: 12px; }
.st-center { text-align: center; }
.st-mode { padding-left: 147px; }
.st-mode svg { width: 44px; height: 32px; fill: none; stroke: #fff; stroke-width: 2; }
.zoom-ctl { display: flex; align-items: center; gap: 3px; padding-top: 2px; }
.minus { width: 14px; height: 2px; background: #fff; }
.slider { position: relative; width: 232px; height: 4px; background: #c3c7d3; border-bottom: 1.5px solid #6a7078; }
.knob { position: absolute; left: 101px; top: -6px; width: 16px; height: 16px; border-radius: 50%; background: #eff0f1; }
.zoom-ctl svg { width: 14px; height: 14px; stroke: #fff; stroke-width: 2; }
```
